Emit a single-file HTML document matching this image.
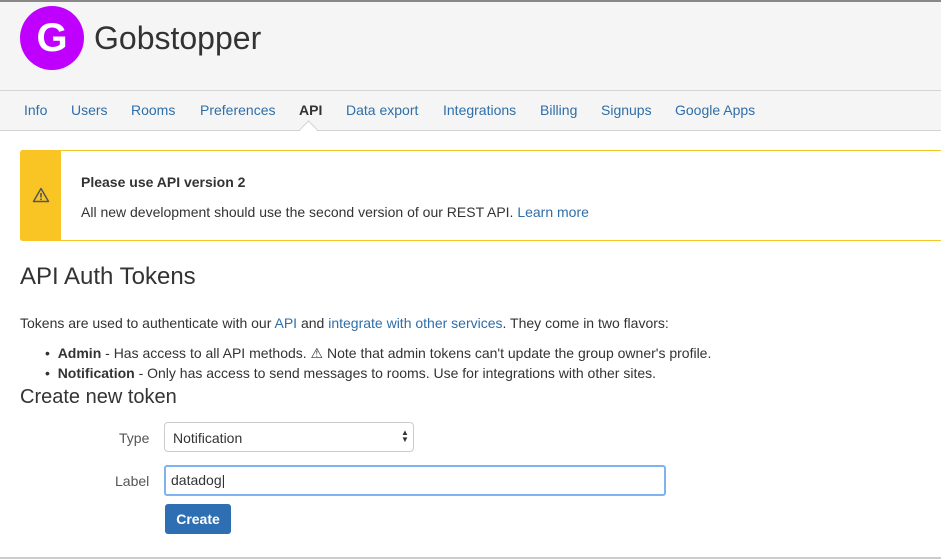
<!DOCTYPE html>
<html><head><style>
body{margin:0;width:941px;height:559px;overflow:hidden;font-family:"Liberation Sans",sans-serif;color:#333;background:#fff;position:relative}
.abs{position:absolute}
a{color:#2f6ea8;text-decoration:none}
</style></head><body>
<div class="abs" style="left:0;top:0;width:941px;height:2px;background:#888"></div>
<div class="abs" style="left:0;top:2px;width:941px;height:88px;background:#f5f5f5"></div>
<div class="abs" style="left:20px;top:6px;width:64px;height:64px;border-radius:50%;background:#c000ff;color:#fff;font-size:40px;font-weight:bold;text-align:center;line-height:64px">G</div>
<div class="abs" style="left:94px;top:20px;font-size:32px;color:#333">Gobstopper</div>
<div class="abs" style="left:0;top:90px;width:941px;height:39px;background:#f5f5f5;border-top:1px solid #d4d4d4;border-bottom:1px solid #d4d4d4"></div>
<div class="abs" style="left:0;top:102px;font-size:14px;color:#2f6ea8;white-space:nowrap">
<span class="abs" style="left:24px">Info</span>
<span class="abs" style="left:71px">Users</span>
<span class="abs" style="left:131px">Rooms</span>
<span class="abs" style="left:200px">Preferences</span>
<span class="abs" style="left:299px;color:#333;font-weight:bold">API</span>
<span class="abs" style="left:346px">Data export</span>
<span class="abs" style="left:443px">Integrations</span>
<span class="abs" style="left:540px">Billing</span>
<span class="abs" style="left:601px">Signups</span>
<span class="abs" style="left:675px">Google Apps</span>
</div>
<div class="abs" style="left:302px;top:123px;width:12px;height:12px;background:#fff;border-left:1px solid #d4d4d4;border-top:1px solid #d4d4d4;transform:rotate(45deg)"></div>
<div class="abs" style="left:20px;top:150px;width:925px;height:89px;border:1px solid #f5c523;border-radius:3px;background:#fff"></div>
<div class="abs" style="left:20px;top:150px;width:41px;height:91px;background:#f8c524;border-radius:3px 0 0 3px"></div>
<svg class="abs" style="left:32px;top:187px" width="18" height="16" viewBox="0 0 18 16"><path d="M9 1.5L16.5 14.5H1.5Z" fill="none" stroke="#555" stroke-width="1.5" stroke-linejoin="round"/><path d="M9 6v4.5" stroke="#555" stroke-width="1.6"/><circle cx="9" cy="12.3" r="0.9" fill="#555"/></svg>
<div class="abs" style="left:81px;top:174px;font-size:14px;font-weight:bold">Please use API version 2</div>
<div class="abs" style="left:81px;top:204px;font-size:14px">All new development should use the second version of our REST API. <a>Learn more</a></div>
<div class="abs" style="left:20px;top:263px;font-size:24px">API Auth Tokens</div>
<div class="abs" style="left:20px;top:315px;font-size:14px">Tokens are used to authenticate with our <a>API</a> and <a>integrate with other services</a>. They come in two flavors:</div>
<div class="abs" style="left:45px;top:345px;font-size:14px">•&nbsp;&nbsp;<b>Admin</b> - Has access to all API methods. ⚠ Note that admin tokens can't update the group owner's profile.</div>
<div class="abs" style="left:45px;top:365px;font-size:14px">•&nbsp;&nbsp;<b>Notification</b> - Only has access to send messages to rooms. Use for integrations with other sites.</div>
<div class="abs" style="left:20px;top:386px;font-size:20px">Create new token</div>
<div class="abs" style="left:119px;top:430px;font-size:14px;color:#555">Type</div>
<div class="abs" style="left:164px;top:422px;width:248px;height:28px;border:1px solid #ccc;border-radius:4px;background:#fff"></div>
<div class="abs" style="left:173px;top:430px;font-size:14px">Notification</div>
<div class="abs" style="left:401px;top:429px;font-size:8px;line-height:7px">▲<br>▼</div>
<div class="abs" style="left:115px;top:473px;font-size:14px;color:#555">Label</div>
<div class="abs" style="left:164px;top:465px;width:498px;height:27px;border:2px solid #7fb3f0;border-radius:3px;background:#fff"></div>
<div class="abs" style="left:171px;top:472px;font-size:14px">datadog|</div>
<div class="abs" style="left:165px;top:504px;width:66px;height:30px;background:#2e6fb4;border-radius:3px;color:#fff;font-size:14px;font-weight:bold;text-align:center;line-height:30px">Create</div>
<div class="abs" style="left:0;top:557px;width:941px;height:2px;background:#ccc"></div>
</body></html>
